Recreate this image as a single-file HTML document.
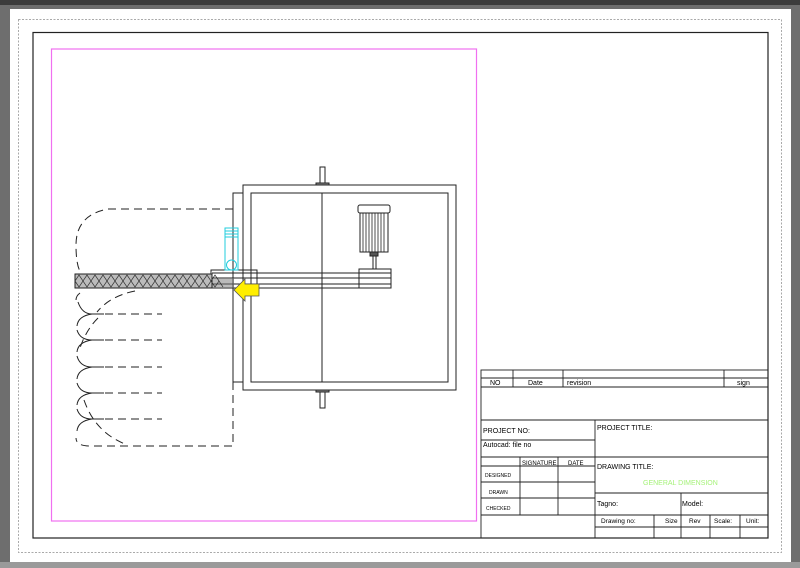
<!DOCTYPE html>
<html><head><style>
html,body{margin:0;padding:0;width:800px;height:568px;overflow:hidden;background:#6e6e6e}
svg{display:block}
text{font-family:"Liberation Sans",sans-serif;font-size:7px;fill:#000}
</style></head><body>
<svg width="800" height="568" viewBox="0 0 800 568" xmlns="http://www.w3.org/2000/svg">
<rect x="0" y="0" width="800" height="568" fill="#6e6e6e"/>
<rect x="0" y="0" width="800" height="5" fill="#3c3c3c"/>
<rect x="10" y="9" width="781" height="553" fill="#fff"/>
<rect x="0" y="562" width="800" height="6" fill="#9a9a9a"/>
<rect x="18.5" y="19.5" width="763" height="533" fill="none" stroke="#aaa" stroke-dasharray="2,1.5"/>
<rect x="33" y="32.5" width="735" height="505.5" fill="none" stroke="#222" stroke-width="1.2"/>
<rect x="51.5" y="49" width="425" height="472" fill="none" stroke="#f070f0" stroke-width="1.2"/>

<!-- machine -->
<g fill="none" stroke="#222" stroke-width="1">
<rect x="243" y="185" width="213" height="205"/>
<rect x="251" y="193" width="197" height="189"/>
<line x1="322" y1="193" x2="322" y2="382"/>
<rect x="233" y="193" width="10" height="189"/>
<rect x="320" y="167" width="5" height="18"/>
<rect x="316" y="183" width="13" height="2" fill="#888"/>
<rect x="320" y="390" width="5" height="18"/>
<rect x="316" y="390" width="13" height="2" fill="#888"/>
<!-- motor -->
<rect x="358" y="205" width="32" height="8" rx="2"/>
<rect x="360" y="213" width="28" height="39"/>
<g stroke-width="0.8">
<line x1="363" y1="213" x2="363" y2="252"/><line x1="366" y1="213" x2="366" y2="252"/><line x1="369" y1="213" x2="369" y2="252"/><line x1="372" y1="213" x2="372" y2="252"/><line x1="375" y1="213" x2="375" y2="252"/><line x1="378" y1="213" x2="378" y2="252"/><line x1="381" y1="213" x2="381" y2="252"/><line x1="384" y1="213" x2="384" y2="252"/>
</g>
<rect x="370" y="252" width="8" height="4" fill="#555"/>
<rect x="373" y="256" width="3" height="13"/>
<rect x="359" y="269" width="32" height="19"/>
<line x1="359" y1="273" x2="391" y2="273"/><line x1="359" y1="278" x2="391" y2="278"/><line x1="359" y1="284" x2="391" y2="284"/>
<!-- belts -->
<line x1="212" y1="273" x2="359" y2="273"/>
<line x1="212" y1="278" x2="359" y2="278"/>
<line x1="212" y1="284" x2="359" y2="284"/>
<line x1="212" y1="288" x2="359" y2="288"/>
<rect x="211" y="270" width="46" height="18"/>
</g>
<rect x="212" y="278" width="22" height="10" fill="#777" opacity="0.5"/>
<!-- screw -->
<rect x="75" y="274" width="137" height="14" fill="#bbb" stroke="#222"/>
<path d="M75 281 l4 -6 4 6 4 -6 4 6 4 -6 4 6 4 -6 4 6 4 -6 4 6 4 -6 4 6 4 -6 4 6 4 -6 4 6 4 -6 4 6 4 -6 4 6 4 -6 4 6 4 -6 4 6 4 -6 4 6 4 -6 4 6 4 -6 4 6 4 -6 4 6 4 -6 4 6 4 -6 4 6 M75 281 l4 6 4 -6 4 6 4 -6 4 6 4 -6 4 6 4 -6 4 6 4 -6 4 6 4 -6 4 6 4 -6 4 6 4 -6 4 6 4 -6 4 6 4 -6 4 6 4 -6 4 6 4 -6 4 6 4 -6 4 6 4 -6 4 6 4 -6 4 6 4 -6 4 6 4 -6 4 6 4 -6 4 6" fill="none" stroke="#333" stroke-width="0.7"/>
<!-- cyan -->
<g fill="none" stroke="#22ccdd" stroke-width="1">
<rect x="225" y="228" width="13" height="42"/>
<line x1="225" y1="231" x2="238" y2="231"/><line x1="225" y1="234" x2="238" y2="234"/><line x1="225" y1="237" x2="238" y2="237"/>
<circle cx="231.5" cy="265" r="5"/>
</g>
<!-- arrow -->
<path d="M234 290 L245 279 L245 284 L259 284 L259 296 L245 296 L245 301 Z" fill="#ffee00" stroke="#555" stroke-width="0.8"/>
<!-- dashed loops -->
<g fill="none" stroke="#222" stroke-width="1" stroke-dasharray="8,5">
<path d="M233 209 L108 209 Q76 215 76 245 Q76 268 82 274"/>
<path d="M233 382 L233 446 L90 446 Q76 446 76 438"/>
<path d="M135 291 Q110 296 97 312 M98 318 Q86 330 80 348"/>
<path d="M84 400 Q95 432 125 444"/>
<path d="M105 314 L162 314 M105 340 L162 340 M105 367 L162 367 M105 393 L162 393 M105 419 L162 419"/>
</g>
<g fill="none" stroke="#222" stroke-width="1">
<path d="M80 293 Q76 296 76 300"/>
<path d="M78 302 Q82 314 92 314 L104 314 M92 314 Q78 316 77 326"/>
<path d="M77 330 Q80 340 92 340 L104 340 M92 340 Q78 342 77 352"/>
<path d="M77 356 Q80 367 92 367 L104 367 M92 367 Q78 369 77 379"/>
<path d="M77 383 Q80 393 92 393 L104 393 M92 393 Q78 395 77 405"/>
<path d="M77 409 Q80 419 92 419 L104 419 M92 419 Q78 421 77 431"/>
</g>

<!-- title block -->
<g fill="none" stroke="#222" stroke-width="0.9">
<rect x="481" y="370" width="287" height="168"/>
<line x1="481" y1="378" x2="768" y2="378"/>
<line x1="481" y1="387" x2="768" y2="387"/>
<line x1="481" y1="420" x2="768" y2="420"/>
<line x1="513" y1="370" x2="513" y2="387"/>
<line x1="563" y1="370" x2="563" y2="387"/>
<line x1="724" y1="370" x2="724" y2="387"/>
<line x1="595" y1="420" x2="595" y2="538"/>
<line x1="481" y1="440" x2="595" y2="440"/>
<line x1="481" y1="457" x2="768" y2="457"/>
<line x1="520" y1="457" x2="520" y2="515"/>
<line x1="558" y1="457" x2="558" y2="515"/>
<line x1="481" y1="466" x2="595" y2="466"/>
<line x1="481" y1="482" x2="595" y2="482"/>
<line x1="481" y1="498" x2="595" y2="498"/>
<line x1="481" y1="515" x2="595" y2="515"/>
<line x1="595" y1="493" x2="768" y2="493"/>
<line x1="595" y1="515" x2="768" y2="515"/>
<line x1="595" y1="527" x2="768" y2="527"/>
<line x1="681" y1="493" x2="681" y2="538"/>
<line x1="654" y1="515" x2="654" y2="538"/>
<line x1="710" y1="515" x2="710" y2="538"/>
<line x1="740" y1="515" x2="740" y2="538"/>
</g>
<text x="490" y="385">NO</text>
<text x="528" y="385">Date</text>
<text x="567" y="385">revision</text>
<text x="737" y="385">sign</text>
<text x="483" y="433">PROJECT NO:</text>
<text x="483" y="447">Autocad: file no</text>
<text x="597" y="430">PROJECT TITLE:</text>
<text x="522" y="465" style="font-size:6px">SIGNATURE</text>
<text x="568" y="465" style="font-size:6px">DATE</text>
<text x="485" y="477" style="font-size:5px">DESIGNED</text>
<text x="489" y="494" style="font-size:5px">DRAWN</text>
<text x="486" y="510" style="font-size:5px">CHECKED</text>
<text x="597" y="469">DRAWING TITLE:</text>
<text x="643" y="485" style="fill:#a6f27a">GENERAL DIMENSION</text>
<text x="597" y="506">Tagno:</text>
<text x="682" y="506">Model:</text>
<text x="601" y="523" style="font-size:6.5px">Drawing no:</text>
<text x="665" y="523" style="font-size:6.5px">Size</text>
<text x="689" y="523" style="font-size:6.5px">Rev</text>
<text x="714" y="523" style="font-size:6.5px">Scale:</text>
<text x="746" y="523" style="font-size:6.5px">Unit:</text>
</svg>
</body></html>
